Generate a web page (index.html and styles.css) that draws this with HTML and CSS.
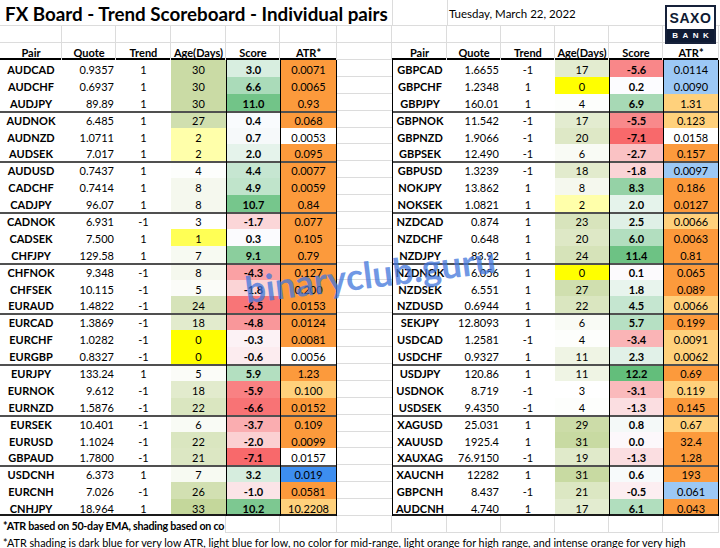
FILE: index.html
```html
<!DOCTYPE html>
<html>
<head>
<meta charset="utf-8">
<title>FX Board - Trend Scoreboard</title>
<link rel="stylesheet" href="styles.css">
</head>
<body>
<div class="sheet">
  <div class="r1">
    <div class="title">FX Board - Trend Scoreboard - Individual pairs</div>
    <div class="h gl"></div>
    <div class="date">Tuesday, March 22, 2022</div>
  </div>
  <div class="row r2">
    <div class="a"></div><div class="b"></div><div class="c"></div><div class="d"></div><div class="e"></div><div class="f"></div><div class="g"></div><div class="h"></div><div class="i"></div><div class="j"></div><div class="k"></div><div class="l"></div><div class="m"></div>
  </div>
  <div class="row hdr">
    <div class="a">Pair</div><div class="b">Quote</div><div class="c">Trend</div><div class="d">Age(Days)</div><div class="e">Score</div><div class="f">ATR*</div><div class="g"></div><div class="h">Pair</div><div class="i">Quote</div><div class="j">Trend</div><div class="k">Age(Days)</div><div class="l">Score</div><div class="m">ATR*</div>
  </div>

  <div class="row dat"><div class="a p">AUDCAD</div><div class="b q">0.9357</div><div class="c">1</div><div class="d" style="background:rgb(202,219,165)">30</div><div class="e s" style="background:rgb(216,238,224)">3.0</div><div class="f o">0.0071</div><div class="g"></div><div class="h p">GBPCAD</div><div class="i q">1.6655</div><div class="j">-1</div><div class="k" style="background:rgb(227,236,208)">17</div><div class="l s" style="background:rgb(249,135,137)">-5.6</div><div class="m lb">0.0114</div></div>
  <div class="row dat"><div class="a p">AUDCHF</div><div class="b q">0.6937</div><div class="c">1</div><div class="d" style="background:rgb(202,219,165)">30</div><div class="e s" style="background:rgb(170,219,185)">6.6</div><div class="f o">0.0065</div><div class="g"></div><div class="h p">GBPCHF</div><div class="i q">1.2348</div><div class="j">1</div><div class="k" style="background:rgb(255,255,0)">0</div><div class="l s" style="background:rgb(252,252,255)">0.2</div><div class="m lb">0.0090</div></div>
  <div class="row dat"><div class="a p">AUDJPY</div><div class="b q">89.89</div><div class="c">1</div><div class="d" style="background:rgb(202,219,165)">30</div><div class="e s" style="background:rgb(114,196,136)">11.0</div><div class="f o">0.93</div><div class="g"></div><div class="h p">GBPJPY</div><div class="i q">160.01</div><div class="j">1</div><div class="k" style="background:rgb(253,254,252)">4</div><div class="l s" style="background:rgb(167,217,181)">6.9</div><div class="m lo">1.31</div></div>

  <div class="row dat grp"><div class="a p">AUDNOK</div><div class="b q">6.485</div><div class="c">1</div><div class="d" style="background:rgb(208,223,175)">27</div><div class="e s" style="background:rgb(249,251,253)">0.4</div><div class="f o">0.068</div><div class="g"></div><div class="h p">GBPNOK</div><div class="i q">11.542</div><div class="j">-1</div><div class="k" style="background:rgb(227,236,208)">17</div><div class="l s" style="background:rgb(249,137,139)">-5.5</div><div class="m lo">0.123</div></div>
  <div class="row dat"><div class="a p">AUDNZD</div><div class="b q">1.0711</div><div class="c">1</div><div class="d" style="background:rgb(255,255,170)">2</div><div class="e s" style="background:rgb(246,249,250)">0.7</div><div class="f">0.0053</div><div class="g"></div><div class="h p">GBPNZD</div><div class="i q">1.9066</div><div class="j">-1</div><div class="k" style="background:rgb(222,232,198)">20</div><div class="l s" style="background:rgb(248,105,107)">-7.1</div><div class="m">0.0158</div></div>
  <div class="row dat"><div class="a p">AUDSEK</div><div class="b q">7.017</div><div class="c">1</div><div class="d" style="background:rgb(255,255,170)">2</div><div class="e s" style="background:rgb(229,243,235)">2.0</div><div class="f o">0.095</div><div class="g"></div><div class="h p">GBPSEK</div><div class="i q">12.490</div><div class="j">-1</div><div class="k" style="background:rgb(249,251,245)">6</div><div class="l s" style="background:rgb(250,194,196)">-2.7</div><div class="m o">0.157</div></div>

  <div class="row dat grp"><div class="a p">AUDUSD</div><div class="b q">0.7437</div><div class="c">1</div><div class="d" style="background:rgb(253,254,252)">4</div><div class="e s" style="background:rgb(198,230,209)">4.4</div><div class="f o">0.0077</div><div class="g"></div><div class="h p">GBPUSD</div><div class="i q">1.3239</div><div class="j">-1</div><div class="k" style="background:rgb(226,235,205)">18</div><div class="l s" style="background:rgb(251,212,214)">-1.8</div><div class="m lb">0.0097</div></div>
  <div class="row dat"><div class="a p">CADCHF</div><div class="b q">0.7414</div><div class="c">1</div><div class="d" style="background:rgb(245,248,238)">8</div><div class="e s" style="background:rgb(192,228,203)">4.9</div><div class="f o">0.0059</div><div class="g"></div><div class="h p">NOKJPY</div><div class="i q">13.862</div><div class="j">1</div><div class="k" style="background:rgb(245,248,238)">8</div><div class="l s" style="background:rgb(149,210,166)">8.3</div><div class="m o">0.186</div></div>
  <div class="row dat"><div class="a p">CADJPY</div><div class="b q">96.07</div><div class="c">1</div><div class="d" style="background:rgb(245,248,238)">8</div><div class="e s" style="background:rgb(118,198,140)">10.7</div><div class="f o">0.84</div><div class="g"></div><div class="h p">NOKSEK</div><div class="i q">1.0821</div><div class="j">1</div><div class="k" style="background:rgb(255,255,170)">2</div><div class="l s" style="background:rgb(229,243,235)">2.0</div><div class="m o">0.0127</div></div>

  <div class="row dat grp"><div class="a p">CADNOK</div><div class="b q">6.931</div><div class="c">-1</div><div class="d">3</div><div class="e s" style="background:rgb(251,214,216)">-1.7</div><div class="f o">0.077</div><div class="g"></div><div class="h p">NZDCAD</div><div class="i q">0.874</div><div class="j">1</div><div class="k" style="background:rgb(216,228,188)">23</div><div class="l s" style="background:rgb(223,240,230)">2.5</div><div class="m lo">0.0066</div></div>
  <div class="row dat"><div class="a p">CADSEK</div><div class="b q">7.500</div><div class="c">1</div><div class="d" style="background:rgb(255,255,85)">1</div><div class="e s" style="background:rgb(251,251,254)">0.3</div><div class="f o">0.105</div><div class="g"></div><div class="h p">NZDCHF</div><div class="i q">0.648</div><div class="j">1</div><div class="k" style="background:rgb(222,232,198)">20</div><div class="l s" style="background:rgb(178,222,191)">6.0</div><div class="m o">0.0063</div></div>
  <div class="row dat"><div class="a p">CHFJPY</div><div class="b q">129.58</div><div class="c">1</div><div class="d" style="background:rgb(247,250,242)">7</div><div class="e s" style="background:rgb(139,206,157)">9.1</div><div class="f o">0.79</div><div class="g"></div><div class="h p">NZDJPY</div><div class="i q">83.92</div><div class="j">1</div><div class="k" style="background:rgb(214,227,185)">24</div><div class="l s" style="background:rgb(109,194,132)">11.4</div><div class="m o">0.81</div></div>

  <div class="row dat grp"><div class="a p">CHFNOK</div><div class="b q">9.348</div><div class="c">-1</div><div class="d" style="background:rgb(245,248,238)">8</div><div class="e s" style="background:rgb(250,161,164)">-4.3</div><div class="f o">0.127</div><div class="g"></div><div class="h p">NZDNOK</div><div class="i q">6.056</div><div class="j">1</div><div class="k" style="background:rgb(255,255,0)">0</div><div class="l s" style="background:rgb(252,250,253)">0.1</div><div class="m o">0.065</div></div>
  <div class="row dat"><div class="a p">CHFSEK</div><div class="b q">10.115</div><div class="c">-1</div><div class="d" style="background:rgb(251,252,248)">5</div><div class="e s" style="background:rgb(251,212,214)">-1.8</div><div class="f o">0.200</div><div class="g"></div><div class="h p">NZDSEK</div><div class="i q">6.551</div><div class="j">1</div><div class="k" style="background:rgb(208,223,175)">27</div><div class="l s" style="background:rgb(232,244,237)">1.8</div><div class="m o">0.089</div></div>
  <div class="row dat"><div class="a p">EURAUD</div><div class="b q">1.4822</div><div class="c">-1</div><div class="d" style="background:rgb(214,227,185)">24</div><div class="e s" style="background:rgb(248,117,119)">-6.5</div><div class="f o">0.0153</div><div class="g"></div><div class="h p">NZDUSD</div><div class="i q">0.6944</div><div class="j">1</div><div class="k" style="background:rgb(218,230,192)">22</div><div class="l s" style="background:rgb(197,230,208)">4.5</div><div class="m lo">0.0066</div></div>

  <div class="row dat grp"><div class="a p">EURCAD</div><div class="b q">1.3869</div><div class="c">-1</div><div class="d" style="background:rgb(226,235,205)">18</div><div class="e s" style="background:rgb(249,151,154)">-4.8</div><div class="f o">0.0124</div><div class="g"></div><div class="h p">SEKJPY</div><div class="i q">12.8093</div><div class="j">1</div><div class="k" style="background:rgb(249,251,245)">6</div><div class="l s" style="background:rgb(182,224,195)">5.7</div><div class="m o">0.199</div></div>
  <div class="row dat"><div class="a p">EURCHF</div><div class="b q">1.0282</div><div class="c">-1</div><div class="d" style="background:rgb(255,255,0)">0</div><div class="e s" style="background:rgb(252,242,245)">-0.3</div><div class="f o">0.0081</div><div class="g"></div><div class="h p">USDCAD</div><div class="i q">1.2581</div><div class="j">-1</div><div class="k" style="background:rgb(253,254,252)">4</div><div class="l s" style="background:rgb(250,180,182)">-3.4</div><div class="m lo">0.0091</div></div>
  <div class="row dat"><div class="a p">EURGBP</div><div class="b q">0.8327</div><div class="c">-1</div><div class="d" style="background:rgb(255,255,0)">0</div><div class="e s" style="background:rgb(252,236,239)">-0.6</div><div class="f">0.0056</div><div class="g"></div><div class="h p">USDCHF</div><div class="i q">0.9327</div><div class="j">1</div><div class="k" style="background:rgb(239,244,228)">11</div><div class="l s" style="background:rgb(225,241,232)">2.3</div><div class="m lo">0.0062</div></div>

  <div class="row dat grp"><div class="a p">EURJPY</div><div class="b q">133.24</div><div class="c">1</div><div class="d" style="background:rgb(251,252,248)">5</div><div class="e s" style="background:rgb(179,223,192)">5.9</div><div class="f o">1.23</div><div class="g"></div><div class="h p">USDJPY</div><div class="i q">120.86</div><div class="j">1</div><div class="k" style="background:rgb(239,244,228)">11</div><div class="l s" style="background:rgb(99,190,123)">12.2</div><div class="m o">0.69</div></div>
  <div class="row dat"><div class="a p">EURNOK</div><div class="b q">9.612</div><div class="c">-1</div><div class="d" style="background:rgb(226,235,205)">18</div><div class="e s" style="background:rgb(249,129,131)">-5.9</div><div class="f lo">0.100</div><div class="g"></div><div class="h p">USDNOK</div><div class="i q">8.719</div><div class="j">-1</div><div class="k">3</div><div class="l s" style="background:rgb(250,186,188)">-3.1</div><div class="m lo">0.119</div></div>
  <div class="row dat"><div class="a p">EURNZD</div><div class="b q">1.5876</div><div class="c">-1</div><div class="d" style="background:rgb(218,230,192)">22</div><div class="e s" style="background:rgb(248,115,117)">-6.6</div><div class="f o">0.0152</div><div class="g"></div><div class="h p">USDSEK</div><div class="i q">9.4350</div><div class="j">-1</div><div class="k" style="background:rgb(253,254,252)">4</div><div class="l s" style="background:rgb(251,222,225)">-1.3</div><div class="m o">0.145</div></div>

  <div class="row dat grp"><div class="a p">EURSEK</div><div class="b q">10.401</div><div class="c">-1</div><div class="d" style="background:rgb(249,251,245)">6</div><div class="e s" style="background:rgb(250,173,176)">-3.7</div><div class="f o">0.109</div><div class="g"></div><div class="h p">XAGUSD</div><div class="i q">25.031</div><div class="j">1</div><div class="k" style="background:rgb(204,220,168)">29</div><div class="l s" style="background:rgb(244,249,248)">0.8</div><div class="m lo">0.67</div></div>
  <div class="row dat"><div class="a p">EURUSD</div><div class="b q">1.1024</div><div class="c">-1</div><div class="d" style="background:rgb(218,230,192)">22</div><div class="e s" style="background:rgb(251,208,210)">-2.0</div><div class="f o">0.0099</div><div class="g"></div><div class="h p">XAUUSD</div><div class="i q">1925.4</div><div class="j">1</div><div class="k" style="background:rgb(200,218,162)">31</div><div class="l s" style="background:rgb(252,248,251)">0.0</div><div class="m o">32.4</div></div>
  <div class="row dat"><div class="a p">GBPAUD</div><div class="b q">1.7800</div><div class="c">-1</div><div class="d" style="background:rgb(220,231,195)">21</div><div class="e s" style="background:rgb(248,105,107)">-7.1</div><div class="f">0.0157</div><div class="g"></div><div class="h p">XAUXAG</div><div class="i q">76.9150</div><div class="j">-1</div><div class="k" style="background:rgb(224,234,202)">19</div><div class="l s" style="background:rgb(251,222,225)">-1.3</div><div class="m o">1.28</div></div>

  <div class="row dat grp"><div class="a p">USDCNH</div><div class="b q">6.373</div><div class="c">1</div><div class="d" style="background:rgb(247,250,242)">7</div><div class="e s" style="background:rgb(214,237,222)">3.2</div><div class="f db">0.019</div><div class="g"></div><div class="h p">XAUCNH</div><div class="i q">12282</div><div class="j">1</div><div class="k" style="background:rgb(200,218,162)">31</div><div class="l s" style="background:rgb(247,250,251)">0.6</div><div class="m o">193</div></div>
  <div class="row dat"><div class="a p">EURCNH</div><div class="b q">7.026</div><div class="c">-1</div><div class="d" style="background:rgb(210,224,178)">26</div><div class="e s" style="background:rgb(251,228,231)">-1.0</div><div class="f o">0.0581</div><div class="g"></div><div class="h p">GBPCNH</div><div class="i q">8.437</div><div class="j">-1</div><div class="k" style="background:rgb(220,231,195)">21</div><div class="l s" style="background:rgb(252,238,241)">-0.5</div><div class="m lb">0.061</div></div>
  <div class="row dat last"><div class="a p">CNHJPY</div><div class="b q">18.964</div><div class="c">1</div><div class="d" style="background:rgb(196,215,155)">33</div><div class="e s" style="background:rgb(125,200,145)">10.2</div><div class="f lo">10.2208</div><div class="g"></div><div class="h p">AUDCNH</div><div class="i q">4.740</div><div class="j">1</div><div class="k" style="background:rgb(227,236,208)">17</div><div class="l s" style="background:rgb(177,222,190)">6.1</div><div class="m o">0.043</div></div>

  <div class="row foot1">
    <div class="fn1">*ATR based on 50-day EMA, shading based on co</div>
    <div class="e"></div><div class="f"></div><div class="g"></div><div class="h"></div><div class="i"></div><div class="j"></div><div class="k"></div><div class="l"></div><div class="m"></div>
  </div>
  <div class="row foot2">
    <div class="fn2">*ATR shading is dark blue for very low ATR, light blue for low, no color for mid-range, light orange for high range, and intense orange for very high</div>
  </div>

  <div class="logo">
    <div class="saxo">SAXO</div>
    <div class="bank">BANK</div>
  </div>
  <div class="wm">binaryclub.guru</div>
</div>
</body>
</html>
```

FILE: styles.css
```css
* { box-sizing: border-box; }

body {
  margin: 0;
  background: #fff;
  font-family: Lato, "Liberation Sans", sans-serif;
  font-size: 11px;
  color: #000;
}

.sheet {
  position: relative;
  width: 720px;
  height: 548px;
  overflow: hidden;
}

/* row 1: title + date */
.r1 {
  display: flex;
  height: 26px;
  box-shadow: inset 0 -1px 0 #dcdcdc;
}
.title {
  width: 392px;
  flex: none;
  padding-left: 5px;
  padding-top: 1px;
  font-weight: 700;
  font-size: 18.8px;
  line-height: 25px;
  white-space: nowrap;
}
.gl { box-shadow: inset 1px 0 0 #dcdcdc, inset 0 -1px 0 #dcdcdc; }
.date {
  flex: 1;
  padding-left: 2px;
  padding-top: 2px;
  line-height: 24px;
  font-size: 11.5px;
  box-shadow: inset 1px 0 0 #dcdcdc, inset 0 -1px 0 #dcdcdc;
}

/* generic rows */
.row { display: flex; height: 16.9px; }
.r2, .hdr, .foot1, .foot2 { height: 17px; }
.row > div {
  flex: none;
  display: flex;
  align-items: center;
  justify-content: center;
  white-space: nowrap;
  padding-top: 2px;
}

.a { width: 62px; }
.b { width: 54px; }
.c { width: 55px; }
.d { width: 55px; }
.e { width: 54px; }
.f { width: 57px; }
.g { width: 55px; }
.h { width: 55px; }
.i { width: 54px; }
.j { width: 54px; }
.k { width: 54px; }
.l { width: 54px; }
.m { width: 56px; }

.r2 > div { box-shadow: inset -1px -1px 0 #dcdcdc; }

.hdr > div {
  font-weight: 700;
  box-shadow: inset -1px 0 0 #dcdcdc, inset 0 -2px 0 #000;
}
.hdr > .g { box-shadow: inset -1px -1px 0 #dcdcdc; }

/* data cells */
.dat > div { background: #fff; }
.dat > .g { box-shadow: inset 0 -1px 0 #dcdcdc; }
.dat > .e, .dat > .f, .dat > .h, .dat > .l, .dat > .m { border-left: 1px solid #000; }
.dat > .f, .dat > .m { border-right: 1px solid #000; }
.grp > div:not(.g) { box-shadow: inset 0 2px 0 #505050; }
.last > div:not(.g) { box-shadow: inset 0 -2px 0 #1a1a1a; }

.p, .s { font-weight: 700; }
.row > .q { justify-content: flex-end; padding-right: 2px; }

.dat > .o { background: #fc9a3c; }
.dat > .lo { background: #ffd17c; }
.dat > .lb { background: #9cc8f5; }
.dat > .db { background: #3d8ef0; }

/* footer */
.foot1 > div { box-shadow: inset -1px -1px 0 #dcdcdc; }
.row > .fn1 {
  width: 226px;
  justify-content: flex-start;
  padding-left: 3px;
  font-weight: 700;
  font-size: 10.7px;
  letter-spacing: -0.24px;
  box-shadow: inset -1px 0 0 #dcdcdc;
}
.row > .fn2 {
  width: 720px;
  justify-content: flex-start;
  padding-left: 3px;
  font-size: 10.8px;
  letter-spacing: 0;
}

/* SAXO logo */
.logo {
  position: absolute;
  left: 665px;
  top: 5px;
  width: 51px;
  height: 39px;
  border: 2px solid #16213a;
  background: #fff;
  display: flex;
  flex-direction: column;
}
.saxo {
  flex: 1;
  display: flex;
  align-items: center;
  justify-content: center;
  font-family: "Liberation Sans", sans-serif;
  font-weight: 700;
  font-size: 14px;
  letter-spacing: 0.6px;
  color: #0e1a33;
}
.bank {
  height: 13px;
  background: #0f1b34;
  color: #fff;
  display: flex;
  align-items: center;
  justify-content: center;
  font-family: "Liberation Sans", sans-serif;
  font-weight: 700;
  font-size: 8px;
  letter-spacing: 4.5px;
  padding-left: 4.5px;
}

/* watermark */
.wm {
  position: absolute;
  left: 244px;
  top: 256px;
  line-height: 36px;
  font-size: 36.5px;
  font-weight: 700;
  color: rgba(66, 118, 220, 0.75);
  white-space: nowrap;
  transform: rotate(-7deg);
}
```
